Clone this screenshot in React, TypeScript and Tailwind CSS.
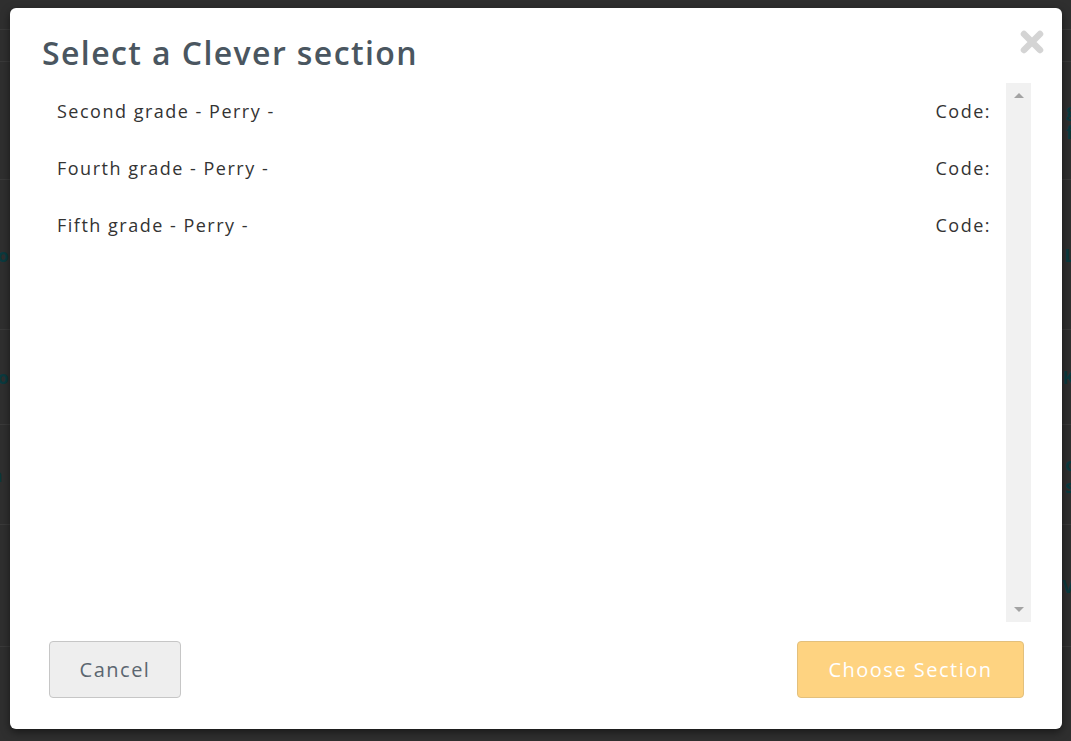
const sections = ['Second grade - Perry -', 'Fourth grade - Perry -', 'Fifth grade - Perry -'];

const bgRows = [
  { h: 'h-[118px]', left: '', right: 'gs', right2: 'fe' },
  { h: 'h-[150px]', left: 'Co', right: 'Le', right2: '' },
  { h: 'h-[95px]', left: 'Co', right: 'Ke', right2: '' },
  { h: 'h-[100px]', left: 'la', right: 'os', right2: 'st' },
  { h: 'h-[122px]', left: '', right: 'Vo', right2: '' },
];

function Backdrop() {
  return (
    <div className="flex flex-col text-[#0b3a3f] font-bold text-[18px]">
      <div className="h-[30px] border-b border-[#3a3a3a]" />
      <div className="h-[32px] border-b border-[#3a3a3a]" />
      {bgRows.map((r, i) => (
        <div key={i} className={`${r.h} border-b border-[#3a3a3a] flex items-center justify-between`}>
          <span className="ml-[-14px] leading-none">{r.left}</span>
          <div className="flex flex-col mr-[-14px] leading-[22px]">
            <span>{r.right}</span>
            {r.right2 && <span>{r.right2}</span>}
          </div>
        </div>
      ))}
    </div>
  );
}

function Scrollbar() {
  return (
    <div className="w-[25px] bg-[#f1f1f1] flex flex-col items-center justify-between py-[10px]">
      <div className="w-0 h-0 border-x-[5px] border-x-transparent border-b-[5px] border-b-[#a3a3a3]" />
      <div className="w-0 h-0 border-x-[5px] border-x-transparent border-t-[5px] border-t-[#a3a3a3]" />
    </div>
  );
}

export default function App() {
  return (
    <div className="relative h-[741px] w-full overflow-hidden bg-[#2f2f2f]" style={{ fontFamily: '"Open Sans", "Liberation Sans", sans-serif' }}>
      <Backdrop />
      <div className="absolute left-[10px] top-[8px] w-[1052px] h-[721px] bg-white rounded-[6px] flex flex-col shadow-[0_3px_9px_rgba(0,0,0,0.5)]">
        <div className="relative pt-[26px] pl-[32px] pr-[18px]">
          <h2 className="text-[32px] leading-[37px] font-semibold tracking-[1.4px] text-[#4a5660]">Select a Clever section</h2>
          <button className="absolute right-[18px] top-[22px] text-[#d4d4d4]">
            <svg width="24" height="24" viewBox="0 0 24 24">
              <path d="M4 4 L20 20 M20 4 L4 20" stroke="currentColor" strokeWidth="6.5" strokeLinecap="round" />
            </svg>
          </button>
        </div>
        <div className="mt-[12px] ml-[32px] mr-[31px] h-[539px] flex">
          <div className="flex-1 flex flex-col">
            {sections.map((s) => (
              <div key={s} className="h-[57px] flex items-center justify-between px-[15px] text-[18px] tracking-[1.5px] text-[#333333]">
                <span>{s}</span>
                <span>Code:</span>
              </div>
            ))}
          </div>
          <Scrollbar />
        </div>
        <div className="mt-[19px] pl-[39px] pr-[38px] flex justify-between">
          <button className="w-[132px] h-[57px] bg-[#eeeeee] border border-[#c6c6c6] rounded-[4px] text-[20px] tracking-[1.5px] text-[#5b6670]">
            Cancel
          </button>
          <button className="w-[227px] h-[57px] bg-[#fed381] border border-[#e3c07c] rounded-[4px] text-[20px] font-medium tracking-[1.5px] text-white">
            Choose Section
          </button>
        </div>
      </div>
    </div>
  );
}
